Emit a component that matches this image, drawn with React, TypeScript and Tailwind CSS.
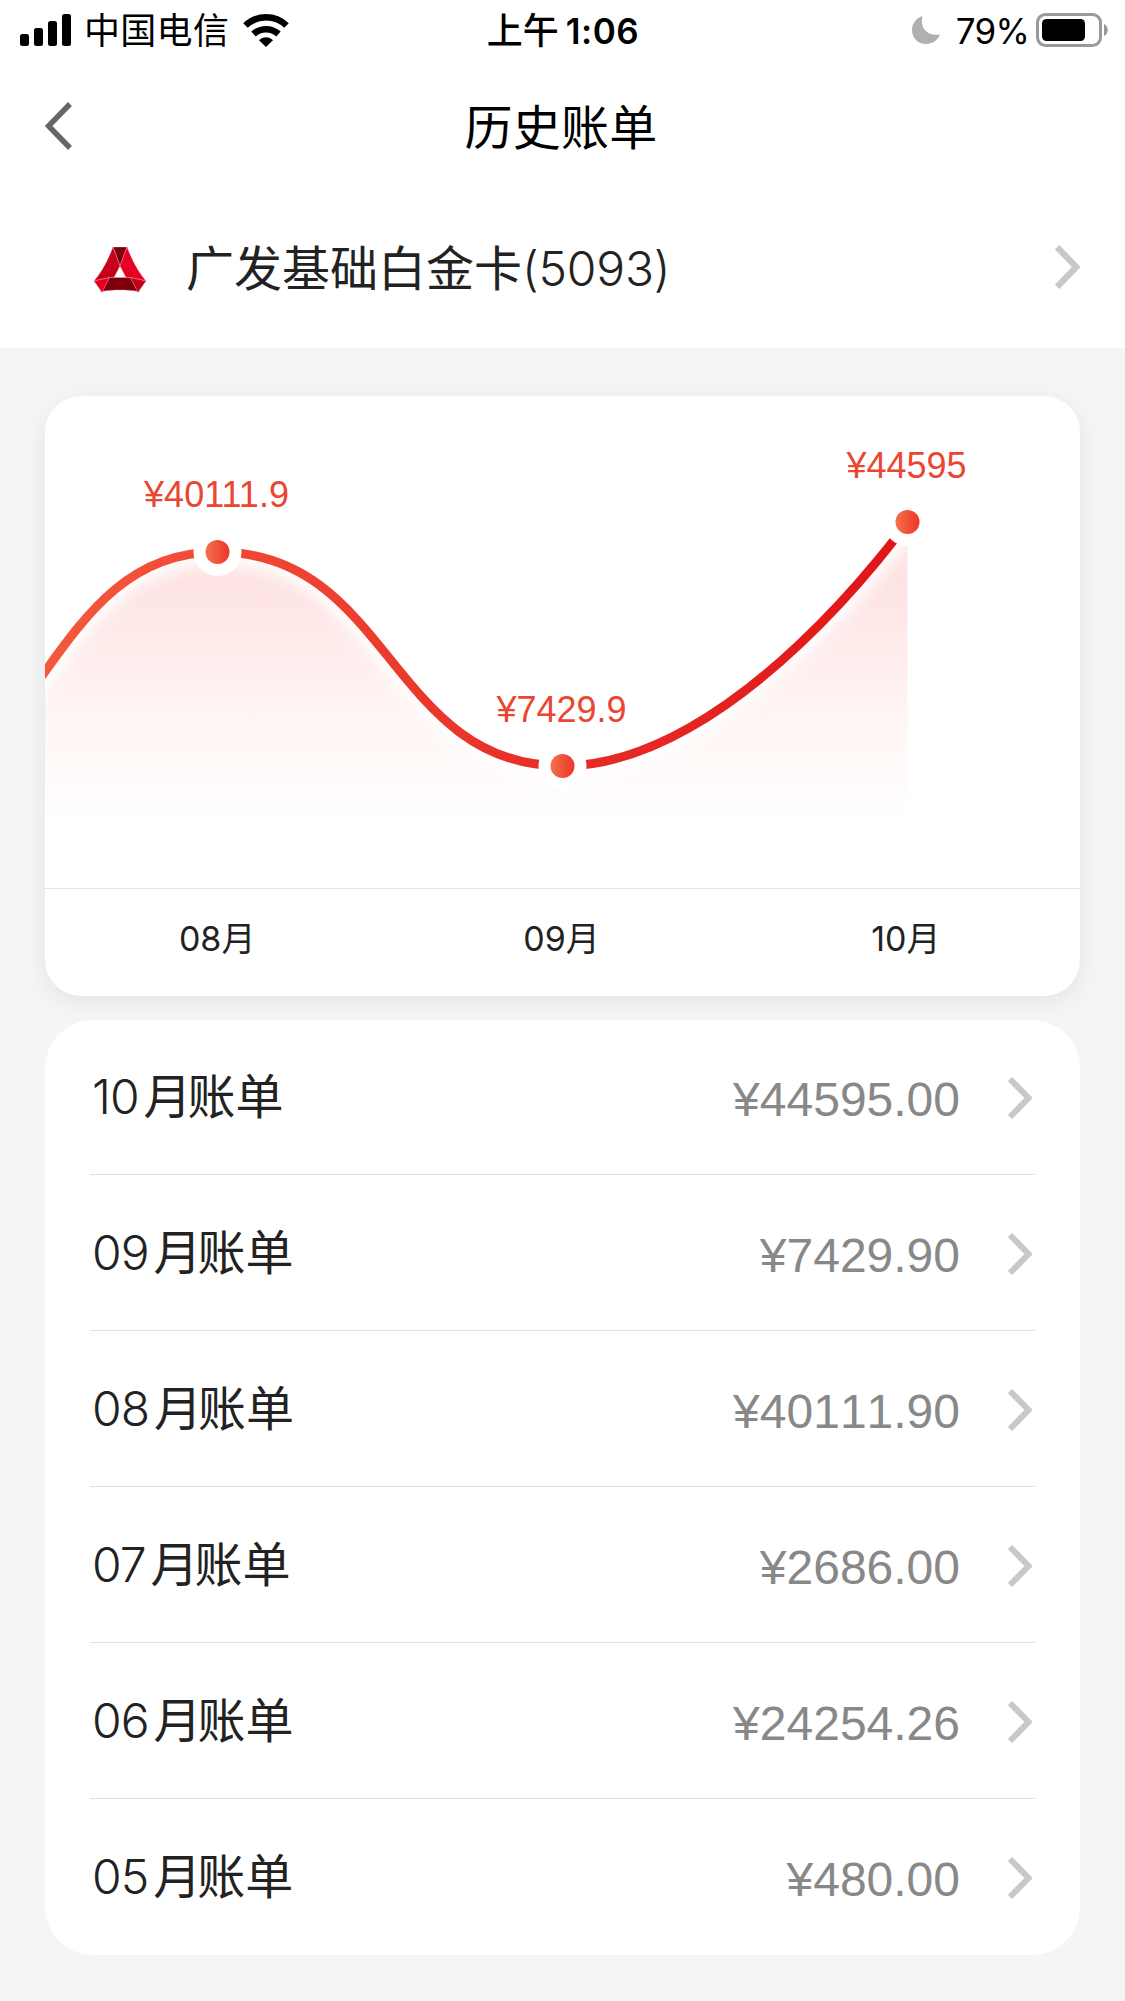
import clsx from "clsx";

interface Bill {
  month: string;
  amount: string;
}

interface Point {
  x: number;
  y: number;
  label: string;
  labelY: number;
}

const bills: Bill[] = [
  { month: "10", amount: "44595.00" },
  { month: "09", amount: "7429.90" },
  { month: "08", amount: "40111.90" },
  { month: "07", amount: "2686.00" },
  { month: "06", amount: "24254.26" },
  { month: "05", amount: "480.00" },
];

const points: Point[] = [
  { x: 172.5, y: 156, label: "¥40111.9", labelY: 111 },
  { x: 517.5, y: 370, label: "¥7429.9", labelY: 326 },
  { x: 862.5, y: 126, label: "¥44595", labelY: 82 },
];

const months = ["08", "09", "10"];

const curve = "M-172 395 C0 395 0 156 172.5 156 C345 156 345 370 517.5 370 C690 370 862.5 126 862.5 126";
const area = `${curve} V430 H-172 Z`;

const StatusBar = () => (
  <div className="grid h-[60px] grid-cols-[1fr_auto_1fr] items-center pl-5 pr-4 text-black">
    <div className="flex items-center">
      <svg className="h-8 w-[51px]" viewBox="0 0 51 32" fill="currentColor">
        <rect x="0" y="20" width="9" height="12" rx="2.5" />
        <rect x="14" y="14" width="9" height="18" rx="2.5" />
        <rect x="28" y="7" width="9" height="25" rx="2.5" />
        <rect x="42" y="0" width="9" height="32" rx="2.5" />
      </svg>
      <span className="ml-[13px] pt-[3px] text-[36px] leading-[57px] tracking-[0.3px]">中国电信</span>
      <svg className="ml-[14px] h-[33px] w-[46px]" viewBox="0 0 46 33" fill="none" stroke="currentColor">
        <path d="M2.500 11.500 C14 0.500 32 0.500 43.500 11.500" strokeWidth="6.5" />
        <path d="M10.500 20 C17.500 13.500 28.500 13.500 35.500 20" strokeWidth="6.5" />
        <path d="M16 26.200 C20 22.300 26 22.300 30 26.200 L23 33 Z" fill="currentColor" stroke="none" />
      </svg>
    </div>
    <div className="flex items-center pr-[3px] pt-0.5 font-semibold">
      <span className="text-[36px] font-medium leading-[57px]">上午</span>
      <span className="ml-[7px] text-[35px] leading-[57px] tracking-[0.5px]">1:06</span>
    </div>
    <div className="flex items-center justify-end">
      <svg className="h-7 w-7" viewBox="0 0 28 28" fill="#b0b0b0">
        <path d="M10.500 0 C7.500 12.500 16 20.500 28 18.500 C25.500 24.500 20.300 28 14 28 C6 28 0 22 0 14 C0 7.300 4.300 2 10.500 0 Z" />
      </svg>
      <span className="ml-4 pt-0.5 text-[35px] leading-[57px] tracking-[-0.8px]">79%</span>
      <svg className="ml-[7px] h-[34px] w-[73px]" viewBox="0 0 73 34">
        <rect x="1.500" y="1.500" width="63" height="31" rx="8" fill="none" stroke="#999" strokeWidth="3" />
        <rect x="6" y="6" width="43" height="22" rx="4.500" fill="#000" />
        <path d="M68 11 C73 13 73 21 68 23 Z" fill="#999" />
      </svg>
    </div>
  </div>
);

const NavBar = () => (
  <div className="grid h-[132px] grid-cols-[1fr_auto_1fr] items-center px-[45px]">
    <svg className="h-12 w-7" viewBox="0 0 28 48" fill="none" stroke="#666" strokeWidth="5.5">
      <path d="M25 2 L3.500 24 L25 46" />
    </svg>
    <h1 className="pr-[3px] pt-0.5 text-[48px] leading-[129px] tracking-[0.3px] text-black">历史账单</h1>
  </div>
);

const Arrow = ({ className }: { className?: string }) => (
  <svg className={clsx("shrink-0", className)} viewBox="0 0 25 42" fill="none" stroke="#c7c7cc" strokeWidth="6">
    <path d="M2 2 L20.500 21 L2 40" />
  </svg>
);

const BankLogo = () => (
  <svg className="h-[46px] w-[52px]" viewBox="0 0 52 46" stroke="#f3a0a8" strokeWidth="0.4">
    <path d="M19 0 H33 L26 19 Z" fill="#7d0008" />
    <path d="M8 44.500 L15.500 30.500 H36.500 L44 44.500 C34 42.500 18 42.500 8 44.500 Z" fill="#7d0008" />
    <path d="M19 0 L26 19 L20 30.500 H15.500 L0 34 C8 25 14 13 19 0 Z" fill="#c4001a" />
    <path d="M0 34 L15.500 30.500 L8 45.500 Z" fill="#e60020" />
    <path d="M33 0 L26 19 L32 30.500 H36.500 L52 34 C44 25 38 13 33 0 Z" fill="#e60023" />
    <path d="M52 34 L36.500 30.500 L44 45.500 Z" fill="#c4001a" />
  </svg>
);

const CardRow = () => (
  <div className="flex h-[156px] items-center pl-[94px] pr-[44px]">
    <BankLogo />
    <span className="ml-10 flex-1 pb-0.5 text-[48px] leading-[146px] text-[#222]">
      广发基础白金卡<span className="font-[350] tracking-[-0.2px]">(5093)</span>
    </span>
    <Arrow className="-mt-1.5 h-[44px] w-[26px]" />
  </div>
);

const TrendChart = () => (
  <div className="overflow-hidden rounded-[36px] bg-white shadow-[0_6px_24px_rgba(0,0,0,0.07)]">
    <svg className="block h-[492px] w-full" viewBox="0 0 1035 492">
      <defs>
        <linearGradient id="line" gradientUnits="userSpaceOnUse" x1="0" y1="0" x2="862" y2="0">
          <stop offset="0" stopColor="#f5583e" />
          <stop offset="0.45" stopColor="#ea372c" />
          <stop offset="1" stopColor="#e01418" />
        </linearGradient>
        <linearGradient id="fill" gradientUnits="userSpaceOnUse" x1="0" y1="190" x2="0" y2="425">
          <stop offset="0" stopColor="#fee3e3" />
          <stop offset="0.55" stopColor="#fff5f4" />
          <stop offset="1" stopColor="#ffffff" />
        </linearGradient>
        <linearGradient id="dot" x1="0" y1="0" x2="1" y2="0">
          <stop offset="0" stopColor="#f4714c" />
          <stop offset="1" stopColor="#ec3529" />
        </linearGradient>
        <clipPath id="areaClip">
          <path d={area} />
        </clipPath>
        <filter id="soft" x="-10%" y="-20%" width="120%" height="140%">
          <feGaussianBlur stdDeviation="8" />
        </filter>
      </defs>
      <path d={area} fill="url(#fill)" />
      {/* soft white edge under the line */}
      <g clipPath="url(#areaClip)">
        <path d={curve} fill="none" stroke="#fff" strokeWidth="24" filter="url(#soft)" />
      </g>
      <path d={curve} fill="none" stroke="url(#line)" strokeWidth="9" />
      {points.map((p) => (
        <g key={p.label}>
          <circle cx={p.x} cy={p.y} r="24" fill="#fff" />
          <circle cx={p.x} cy={p.y} r="12" fill="url(#dot)" />
          <text
            x={p.x - 1}
            y={p.labelY}
            textAnchor="middle"
            fill="#ea4632"
            className="font-['Liberation_Sans',sans-serif] text-[36px]"
          >
            {p.label}
          </text>
        </g>
      ))}
    </svg>
    <div className="grid h-[108px] grid-cols-3 border-t border-[#e3e3e3] pr-[2px] text-center text-[34px] leading-[100px] text-[#222]">
      {months.map((m) => (
        <span key={m}>
          {m}月
        </span>
      ))}
    </div>
  </div>
);

const BillList = () => (
  <ul className="relative mt-6 rounded-[48px] bg-white px-[45px]">
    {bills.map((bill, index) => (
      <li
        key={bill.month}
        className={clsx(
          "flex items-center px-[2px]",
          index === 0 ? "h-[155px]" : "h-[156px]",
          index < bills.length - 1 ? "border-b border-[#e2e2e2]" : "mb-px"
        )}
      >
        <span className="flex-1 text-[48px] leading-[154px] text-[#222]">
          <span className="mr-[5px] font-[350] tracking-[-1px]">{bill.month}</span>
          <span className="tracking-[-4px]">月</span>账单
        </span>
        <span className="pt-[5px] font-['Liberation_Sans',sans-serif] text-[48px] leading-[151px] text-[#888] [font-kerning:none]">
          ¥{bill.amount}
        </span>
        <Arrow className="ml-[48px] mt-0.5 h-[42px] w-[25px]" />
      </li>
    ))}
  </ul>
);

const App = () => {
  return (
    <div className="h-[2001px] w-[1125px] overflow-hidden bg-[#f5f5f5] font-['Inter','Noto_Sans_CJK_SC',sans-serif]">
      <header className="bg-white">
        <StatusBar />
        <NavBar />
        <CardRow />
      </header>
      <main className="px-[45px] pt-12">
        <TrendChart />
        <BillList />
      </main>
    </div>
  );
};

export default App;
